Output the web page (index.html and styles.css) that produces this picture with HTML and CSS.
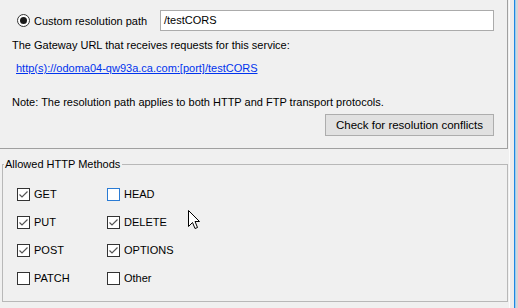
FILE: index.html
```html
<!DOCTYPE html>
<html>
<head>
<meta charset="utf-8">
<link rel="stylesheet" href="styles.css">
</head>
<body>
<div class="screen">
  <div class="main">
    <section class="panel">
      <div class="path-row">
        <span class="radio"><span class="dot"></span></span>
        <span class="path-label">Custom resolution path</span>
        <span class="input">/testCORS</span>
      </div>
      <p class="text gw">The Gateway URL that receives requests for this service:</p>
      <a class="link" href="#">http(s)://odoma04-qw93a.ca.com:[port]/testCORS</a>
      <p class="text note">Note: The resolution path applies to both HTTP and FTP transport protocols.</p>
      <div class="btn-row"><button class="btn">Check for resolution conflicts</button></div>
    </section>
    <fieldset class="group">
      <legend class="legend">Allowed HTTP Methods</legend>
      <div class="grid">
        <label class="cb"><span class="box on"><svg viewBox="0 0 11 11"><path d="M1.5 5.5 L4 8 L9.5 2.5"/></svg></span>GET</label>
        <label class="cb"><span class="box hover"></span>HEAD</label>
        <label class="cb"><span class="box on"><svg viewBox="0 0 11 11"><path d="M1.5 5.5 L4 8 L9.5 2.5"/></svg></span>PUT</label>
        <label class="cb"><span class="box on"><svg viewBox="0 0 11 11"><path d="M1.5 5.5 L4 8 L9.5 2.5"/></svg></span>DELETE</label>
        <label class="cb"><span class="box on"><svg viewBox="0 0 11 11"><path d="M1.5 5.5 L4 8 L9.5 2.5"/></svg></span>POST</label>
        <label class="cb"><span class="box on"><svg viewBox="0 0 11 11"><path d="M1.5 5.5 L4 8 L9.5 2.5"/></svg></span>OPTIONS</label>
        <label class="cb"><span class="box"></span>PATCH</label>
        <label class="cb"><span class="box"></span>Other</label>
      </div>
    </fieldset>
  </div>
  <div class="edge"></div>
  <svg class="cursor" width="13" height="20" viewBox="0 0 13 20"><path d="M0.5 0.5 L0.5 16.5 L4.5 12.5 L7 18.5 L9.5 17.5 L7 11.5 L11.5 11.5 Z" fill="#fff" stroke="#000" stroke-width="1"/></svg>
</div>
</body>
</html>
```
FILE: styles.css
```css
* { box-sizing: border-box; }
html, body { margin: 0; padding: 0; }
body {
  background: #f0f0f0;
  font-family: "Liberation Sans", Arial, sans-serif;
  font-size: 11px;
  color: #000;
}
.screen {
  position: relative;
  width: 518px;
  height: 308px;
  overflow: hidden;
  display: flex;
}
.main {
  width: 508px;
  display: flex;
  flex-direction: column;
}
.panel {
  height: 149px;
  border-right: 1px solid #a0a0a0;
  border-bottom: 1px solid #a0a0a0;
  padding: 10px 13px 0 12px;
  display: flex;
  flex-direction: column;
}
.path-row {
  display: flex;
  align-items: center;
  height: 21px;
  padding-left: 5px;
}
.radio {
  width: 13px;
  height: 13px;
  border: 1px solid #333;
  border-radius: 50%;
  display: flex;
  align-items: center;
  justify-content: center;
  background: #fff;
}
.dot {
  width: 7px;
  height: 7px;
  border-radius: 50%;
  background: #1a1a1a;
}
.path-label {
  margin-left: 4px;
  width: 126px;
}
.input {
  flex: 1;
  height: 21px;
  background: #fff;
  border: 1px solid #ababab;
  padding: 3px 3px;
  line-height: 13px;
}
.text { margin: 0; line-height: 14px; }
.gw { margin-top: 7px; }
.link {
  margin-top: 9px;
  margin-left: 4px;
  color: #0033ee;
  text-decoration: underline;
  line-height: 14px;
}
.note { margin-top: 20px; }
.btn-row {
  display: flex;
  justify-content: flex-end;
  margin-top: 5px;
}
.btn {
  width: 169px;
  height: 22px;
  background: #e1e1e1;
  border: 1px solid #adadad;
  font: inherit;
  font-size: 11.5px;
  color: #000;
  padding: 0;
}
.group {
  margin: 8px 0 0 2px;
  width: 506px;
  height: 145px;
  border: 1px solid #b8b8b8;
  padding: 16px 0 0 14px;
}
.legend {
  padding: 0 2px 0 1px;
  margin-left: -13px;
  line-height: 14px;
}
.grid {
  display: grid;
  grid-template-columns: 90px 90px;
  grid-auto-rows: 28px;
}
.cb {
  display: flex;
  align-items: center;
  height: 14px;
}
.box {
  width: 13px;
  height: 13px;
  border: 1px solid #333;
  background: #fff;
  margin-right: 4px;
  display: flex;
}
.box.hover { border-color: #2a7bd4; }
.box svg { width: 11px; height: 11px; }
.box path { fill: none; stroke: #555; stroke-width: 1.2; }
.edge {
  width: 10px;
  background: linear-gradient(to right, #f0f0f0 0 1px, #fbfbfb 1px 2px, #ececec 2px 6px, #1e88e0 6px 7px, #9ccaf0 7px 8px, #d6d6d6 8px);
}
.cursor {
  position: absolute;
  left: 188px;
  top: 210px;
}
```
